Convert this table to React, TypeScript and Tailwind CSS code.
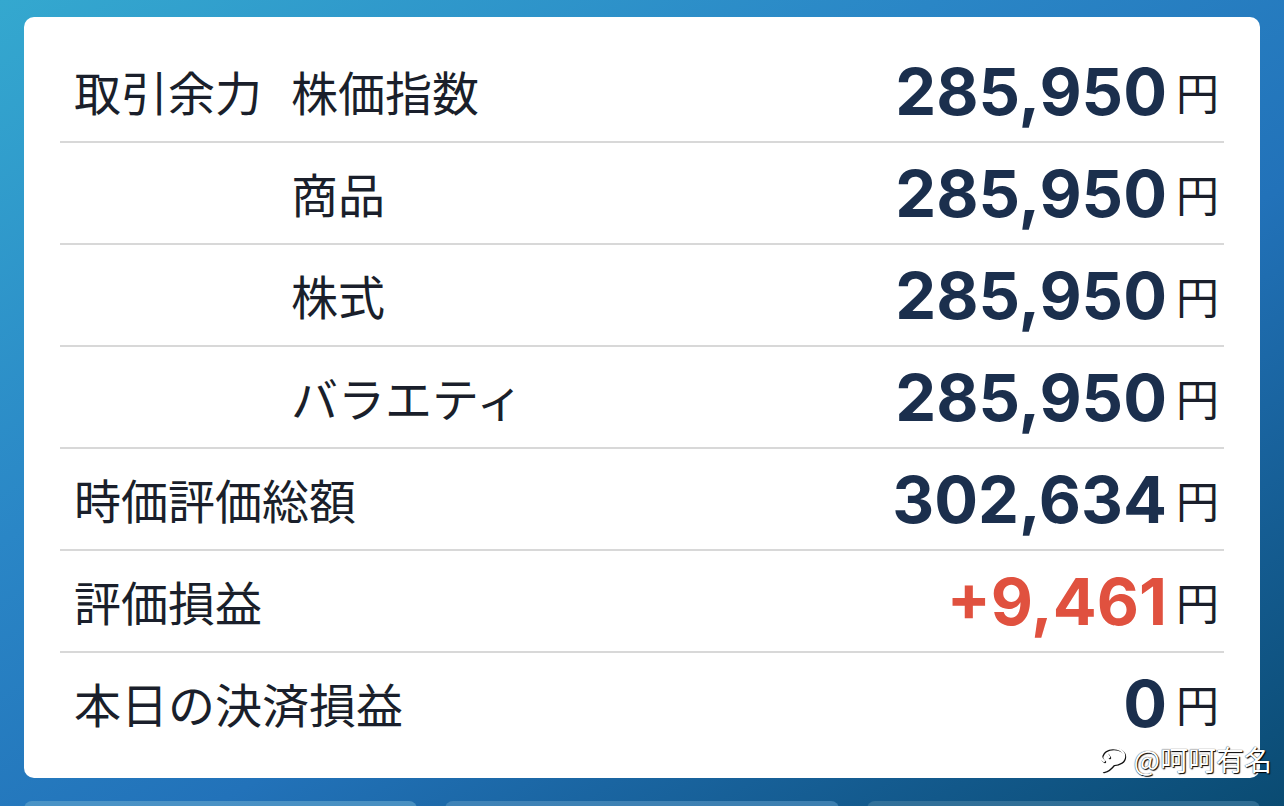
import React from 'react'

type Row = { main?: string; sub?: string; value: string; red?: boolean }

const ROWS: Row[] = [
  { main: '取引余力', sub: '株価指数', value: '285,950' },
  { sub: '商品', value: '285,950' },
  { sub: '株式', value: '285,950' },
  { sub: 'バラエティ', value: '285,950' },
  { main: '時価評価総額', value: '302,634' },
  { main: '評価損益', value: '+9,461', red: true },
  { main: '本日の決済損益', value: '0' },
]

const jp = { fontFamily: '"Noto Sans CJK JP", "Noto Sans", sans-serif' }
const num = { fontFamily: 'Inter, "Liberation Sans", sans-serif' }

export default function App() {
  return (
    <div className="relative h-[806px] w-[1284px] overflow-hidden bg-[linear-gradient(150deg,#34a8cf_0%,#2a86c6_35%,#2272b9_60%,#0a4b72_100%)]">
      <div className="mx-6 mt-[17px] rounded-[10px] bg-white px-9 pt-6 pb-[25px]">
        {ROWS.map((r, i) => (
          <div
            key={i}
            className={
              'flex items-center pl-[14px] pr-[5px] ' +
              (i < ROWS.length - 1 ? 'h-[102px] border-b-2 border-[#d8d8d8]' : 'h-[100px]')
            }
          >
            {r.sub ? (
              <>
                <span className="w-[217px] text-[47px] text-[#1a1f2b]" style={jp}>
                  {r.main}
                </span>
                <span className="text-[47px] text-[#1a1f2b]" style={jp}>
                  {r.sub}
                </span>
              </>
            ) : (
              <span className="text-[47px] text-[#1a1f2b]" style={jp}>
                {r.main}
              </span>
            )}
            <div className="ml-auto flex items-center">
              <span
                className={
                  'text-[65px] font-bold leading-none ' +
                  (r.red ? 'text-[#e0513f]' : 'text-[#1b2f4d]')
                }
                style={num}
              >
                {r.value}
              </span>
              <span className="ml-[9px] text-[43px] leading-none text-[#1a1f2b]" style={jp}>
                円
              </span>
            </div>
          </div>
        ))}
      </div>

      {/* next cards peeking below */}
      <div className="mx-6 mt-[23px] grid grid-cols-3 gap-7">
        <div className="h-10 rounded-[8px] bg-[#5b9fcb]/70" />
        <div className="h-10 rounded-[8px] bg-[#4e8fbd]/70" />
        <div className="h-10 rounded-[8px] bg-[#3f7ba0]/70" />
      </div>

      {/* watermark */}
      <div
        className="absolute right-[12px] bottom-[32px] flex items-center gap-[6px] text-[28px] leading-none text-white [text-shadow:0_0_1px_#000,1px_1px_1px_#000]"
        style={jp}
      >
        <svg className="h-[30px] w-[30px] shrink-0" viewBox="0 0 30 30" fill="none" stroke="#fff" strokeWidth="2.4" strokeLinecap="round" style={{ filter: 'drop-shadow(1px 1px 0 #111)' }}>
          <path d="M3 12c1-5 6-8 12-8s11 3 11 8c0 5-5 8-11 8" />
          <path d="M15 20c-2 3-6 6-10 7" />
          <path d="M3 12c0 2 1 4 3 5" />
          <path d="M9 10l2 3" />
        </svg>
        <span>@呵呵有名</span>
      </div>
    </div>
  )
}
